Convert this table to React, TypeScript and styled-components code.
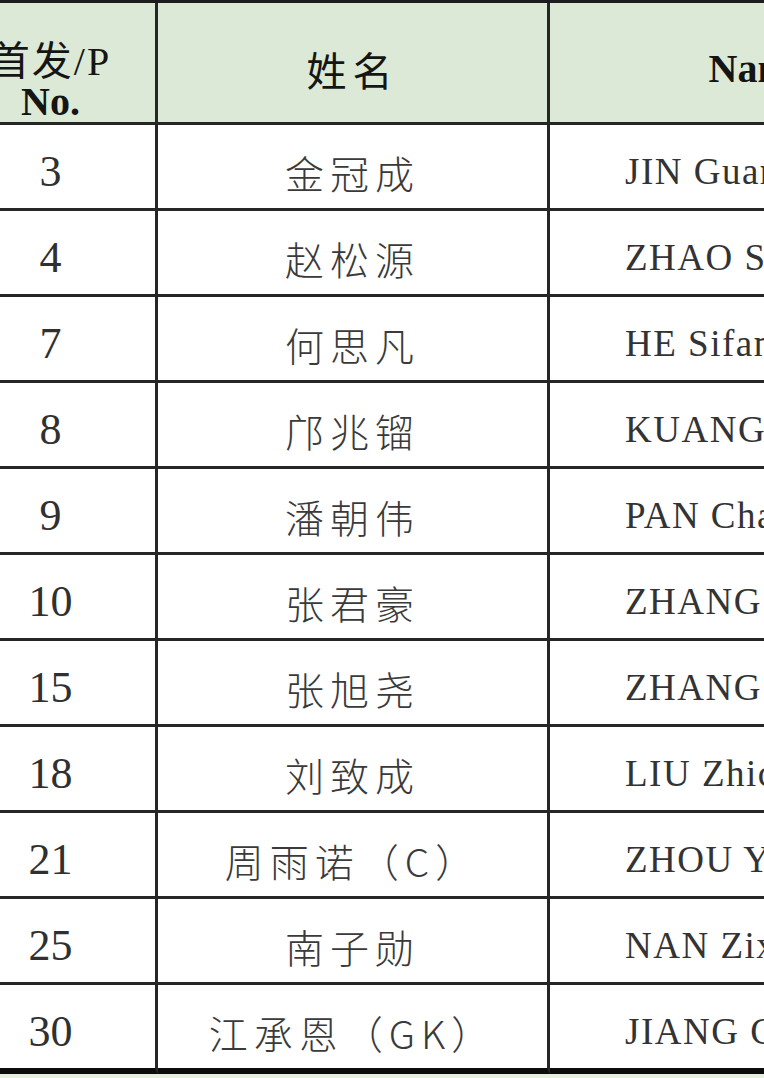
import React from "react";
import styled, { createGlobalStyle } from "styled-components";

interface Player {
  no: number;
  cn: string;
  en: string;
}

const players: Player[] = [
  { no: 3, cn: "金冠成", en: "JIN Guancheng" },
  { no: 4, cn: "赵松源", en: "ZHAO Songyuan" },
  { no: 7, cn: "何思凡", en: "HE Sifan" },
  { no: 8, cn: "邝兆镏", en: "KUANG Zhaolei" },
  { no: 9, cn: "潘朝伟", en: "PAN Chaowei" },
  { no: 10, cn: "张君豪", en: "ZHANG Junhao" },
  { no: 15, cn: "张旭尧", en: "ZHANG Xuyao" },
  { no: 18, cn: "刘致成", en: "LIU Zhicheng" },
  { no: 21, cn: "周雨诺（C）", en: "ZHOU Yunuo" },
  { no: 25, cn: "南子勋", en: "NAN Zixun" },
  { no: 30, cn: "江承恩（GK）", en: "JIANG Chengen" },
];

const GlobalStyle = createGlobalStyle`
  html, body {
    margin: 0;
    padding: 0;
    background: #e6f0e1;
    overflow: hidden;
  }
`;

const Sheet = styled.div`
  width: 764px;
  height: 1078px;
  overflow: hidden;
  background: #e6f0e1;
`;

// roster table, left column cropped by the screenshot
const Grid = styled.div`
  display: grid;
  grid-template-columns: 212px 392px 420px;
  grid-template-rows: 122px repeat(10, 86px) 89px;
  margin-left: -54px;
  width: 1024px;
  border-top: 3px solid #1c1c1c;
  background: #ffffff;

  & > div:nth-last-child(-n + 3) {
    border-bottom: 6px solid #0c0c0c;
  }
`;

const Cell = styled.div<{ $align?: "center" | "left" }>`
  box-sizing: border-box;
  display: flex;
  align-items: center;
  justify-content: ${(p) => (p.$align === "left" ? "flex-start" : "center")};
  padding: 10px 0 0 ${(p) => (p.$align === "left" ? "75px" : "0")};
  border-right: 3px solid #262626;
  border-bottom: 3px solid #262626;
  white-space: nowrap;
  overflow: hidden;
  background: #ffffff;
`;

const HeadCell = styled(Cell)`
  background: #dce9d6;
  color: #151515;
  padding-top: 12px;
`;

const NoHead = styled(HeadCell)`
  flex-direction: column;
  padding-top: 38px;
  font-family: "Liberation Serif", "Noto Sans CJK SC", serif;
  font-size: 40px;
  line-height: 40px;
`;

const NoHeadLine = styled.span<{ $bold?: boolean }>`
  font-weight: ${(p) => (p.$bold ? 700 : 400)};
  letter-spacing: ${(p) => (p.$bold ? "0" : "2px")};
`;

const CnHead = styled.span`
  font-family: "Noto Sans CJK SC", sans-serif;
  font-size: 40px;
  letter-spacing: 6px;
`;

const EnHead = styled.span`
  font-family: "Liberation Serif", serif;
  font-weight: 700;
  font-size: 40px;
`;

const Num = styled.span`
  font-family: "Liberation Serif", serif;
  font-size: 44px;
  color: #303030;
`;

const CnName = styled.span`
  font-family: "Noto Sans CJK SC", sans-serif;
  font-size: 39px;
  letter-spacing: 6px;
  color: #3a3a3a;
  font-weight: 300;
`;

const EnName = styled.span`
  font-family: "Liberation Serif", serif;
  font-size: 37px;
  letter-spacing: 1.5px;
  color: #333333;
`;

const App: React.FC = () => {
  return (
    <Sheet>
      <GlobalStyle />
      <Grid>
        <NoHead>
          <NoHeadLine>首发/P</NoHeadLine>
          <NoHeadLine $bold>No.</NoHeadLine>
        </NoHead>
        <HeadCell>
          <CnHead>姓名</CnHead>
        </HeadCell>
        <HeadCell>
          <EnHead>Name</EnHead>
        </HeadCell>

        {players.map((p) => (
          <React.Fragment key={p.no}>
            <Cell>
              <Num>{p.no}</Num>
            </Cell>
            <Cell>
              <CnName>{p.cn}</CnName>
            </Cell>
            <Cell $align="left">
              <EnName>{p.en}</EnName>
            </Cell>
          </React.Fragment>
        ))}
      </Grid>
    </Sheet>
  );
};

export default App;
